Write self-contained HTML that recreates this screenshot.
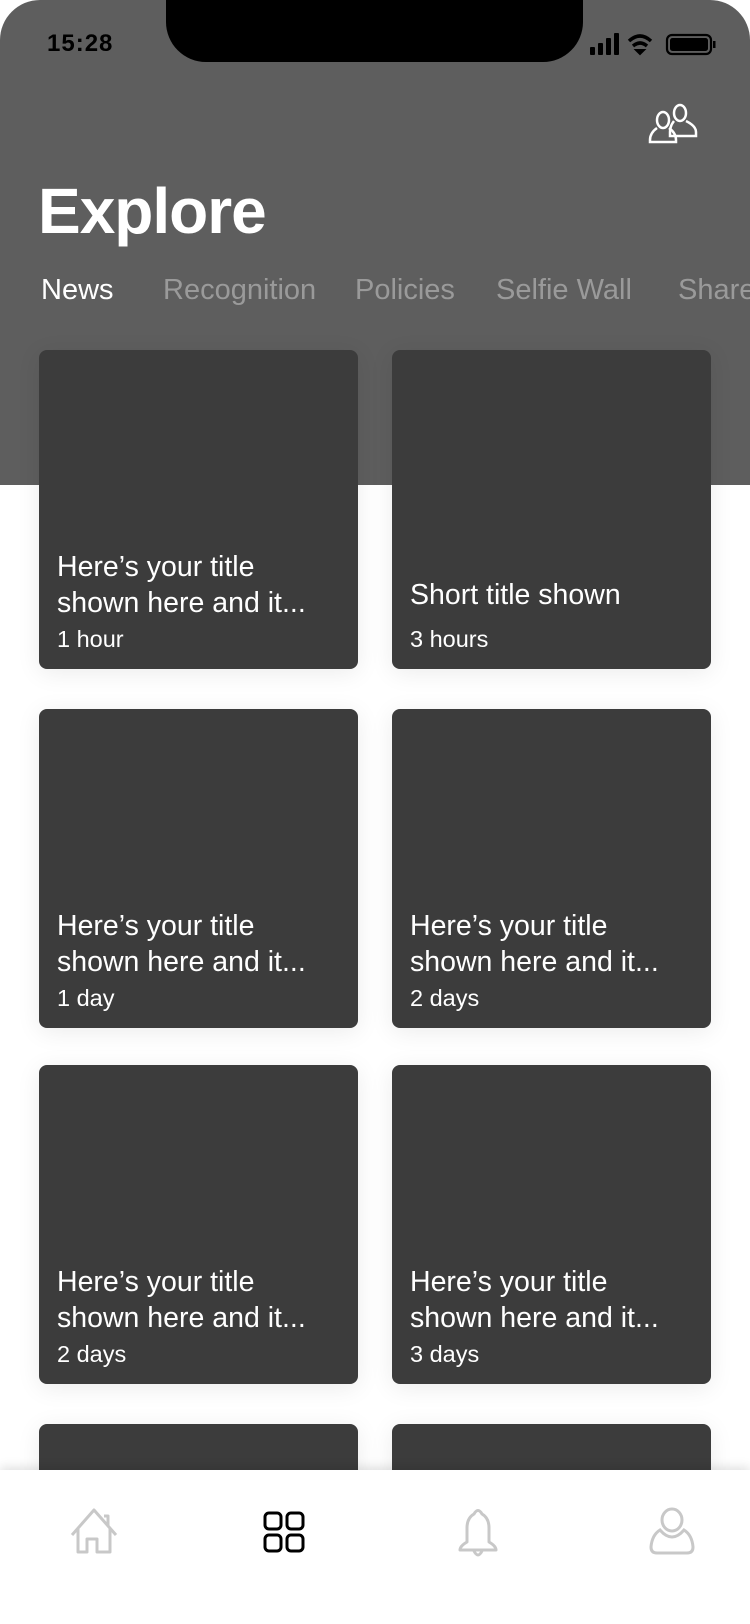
<!DOCTYPE html>
<html><head><meta charset="utf-8"><style>
*{margin:0;padding:0;box-sizing:border-box}
html,body{width:750px;height:1624px;overflow:hidden;background:#fff}
#w{position:relative;width:750px;height:1624px;overflow:hidden;font-family:"Liberation Sans",Arial,sans-serif}
.hdr{position:absolute;left:0;top:0;width:750px;height:485px;background:#5e5e5e;border-radius:40px 40px 0 0}
.notch{position:absolute;left:166px;top:0;width:417px;height:62px;background:#000;border-radius:0 0 40px 40px}
.time{position:absolute;left:47px;top:30px;font-size:24px;color:#000;letter-spacing:1px;font-weight:bold;-webkit-text-stroke:0}
.title{position:absolute;left:38px;top:174px;font-size:64px;font-weight:bold;color:#fff;letter-spacing:-1px}
.tab{position:absolute;top:274px;font-size:29px;color:#9a9a9a;white-space:nowrap}
.card{position:absolute;width:319px;height:319px;background:#3c3c3c;border-radius:8px;box-shadow:0 4px 24px rgba(0,0,0,.08)}
.card .t{position:absolute;left:18px;font-size:28.5px;color:#fff;line-height:36px;white-space:nowrap}
.card .d{position:absolute;left:18px;top:276px;font-size:23.5px;color:#fff}
.nav{position:absolute;left:0;top:1470px;width:750px;height:154px;background:#fff;box-shadow:0 -3px 10px rgba(0,0,0,.12)}
svg{position:absolute}
</style></head><body><div id="w">
<div class="hdr"></div>
<div class="notch"></div>
<div class="time">15:28</div>
<svg style="left:590px;top:31px" width="126" height="26" viewBox="0 0 126 26">
<rect x="0" y="16" width="5" height="8" rx="1" fill="#000"/><rect x="8" y="12" width="5" height="12" rx="1" fill="#000"/><rect x="16" y="7" width="5" height="17" rx="1" fill="#000"/><rect x="24" y="2" width="5" height="22" rx="1" fill="#000"/>
<path d="M39 10 Q50 0 61 10" stroke="#000" stroke-width="3.5" fill="none"/><path d="M43 15 Q50 9 57 15" stroke="#000" stroke-width="3.5" fill="none"/><path d="M46 19 L50 23 L54 19Z" fill="#000" stroke="#000" stroke-width="2"/>
<rect x="77" y="4" width="44" height="19" rx="5" fill="none" stroke="#000" stroke-width="2.2"/><rect x="80" y="7" width="38" height="13" rx="2.5" fill="#000"/><rect x="123" y="10" width="2.5" height="7" fill="#000"/>
</svg>
<svg style="left:648px;top:100px" width="52" height="46" viewBox="0 0 52 46" fill="none" stroke="#fff" stroke-width="2.5">
<ellipse cx="32" cy="13" rx="6" ry="8"/><path d="M26 21 Q22 26 22 32 L22 36 L48 36 L48 32 Q48 26 38 21"/>
<ellipse cx="15" cy="20" rx="6" ry="8"/><path d="M9 28 Q2 33 2 40 L2 42 L28 42 L28 40 Q28 33 21 28"/>
</svg>
<div class="title">Explore</div>
<div class="tab" style="left:41px;color:#fff">News</div>
<div class="tab" style="left:163px">Recognition</div>
<div class="tab" style="left:355px">Policies</div>
<div class="tab" style="left:496px">Selfie Wall</div>
<div class="tab" style="left:678px">Share</div>

<div class="card" style="left:39px;top:350px"><div class="t" style="top:199px">Here’s your title<br>shown here and it...</div><div class="d">1 hour</div></div>
<div class="card" style="left:392px;top:350px"><div class="t" style="top:227px">Short title shown</div><div class="d">3 hours</div></div>
<div class="card" style="left:39px;top:709px"><div class="t" style="top:199px">Here’s your title<br>shown here and it...</div><div class="d">1 day</div></div>
<div class="card" style="left:392px;top:709px"><div class="t" style="top:199px">Here’s your title<br>shown here and it...</div><div class="d">2 days</div></div>
<div class="card" style="left:39px;top:1065px"><div class="t" style="top:199px">Here’s your title<br>shown here and it...</div><div class="d">2 days</div></div>
<div class="card" style="left:392px;top:1065px"><div class="t" style="top:199px">Here’s your title<br>shown here and it...</div><div class="d">3 days</div></div>
<div class="card" style="left:39px;top:1424px;height:60px"></div>
<div class="card" style="left:392px;top:1424px;height:60px"></div>

<div class="nav"></div>
<svg style="left:70px;top:1508px" width="48" height="48" viewBox="0 0 48 48" fill="none" stroke="#c8c8c8" stroke-width="3" stroke-linejoin="round">
<path d="M2 27 L24 2 L46 27"/><path d="M38 18 L38 8 L34 8"/><path d="M8 21 L8 44 L17 44 L17 31 L27 31 L27 44 L40 44 L40 21"/>
</svg>
<svg style="left:263px;top:1511px" width="42" height="42" viewBox="0 0 42 42" fill="none" stroke="#000" stroke-width="3">
<rect x="2" y="2" width="16" height="16" rx="4"/><rect x="24" y="2" width="16" height="16" rx="4"/><rect x="2" y="24" width="16" height="16" rx="4"/><rect x="24" y="24" width="16" height="16" rx="4"/>
</svg>
<svg style="left:456px;top:1508px" width="44" height="50" viewBox="0 0 44 50" fill="none" stroke="#c8c8c8" stroke-width="3" stroke-linejoin="round">
<path d="M18 6 Q22 -1 26 6 Q33 10 33 20 L33 34 Q40 38 40 42 L4 42 Q4 38 11 34 L11 20 Q11 10 18 6Z"/><path d="M18 43 Q22 51 26 43"/>
</svg>
<svg style="left:648px;top:1507px" width="48" height="50" viewBox="0 0 48 50" fill="none" stroke="#c8c8c8" stroke-width="3">
<ellipse cx="24" cy="13" rx="10" ry="11"/><path d="M12 23 Q4 28 3 40 Q3 46 9 46 L39 46 Q45 46 45 40 Q44 28 36 23 Q30 30 24 30 Q18 30 12 23Z"/>
</svg>
</div></body></html>
